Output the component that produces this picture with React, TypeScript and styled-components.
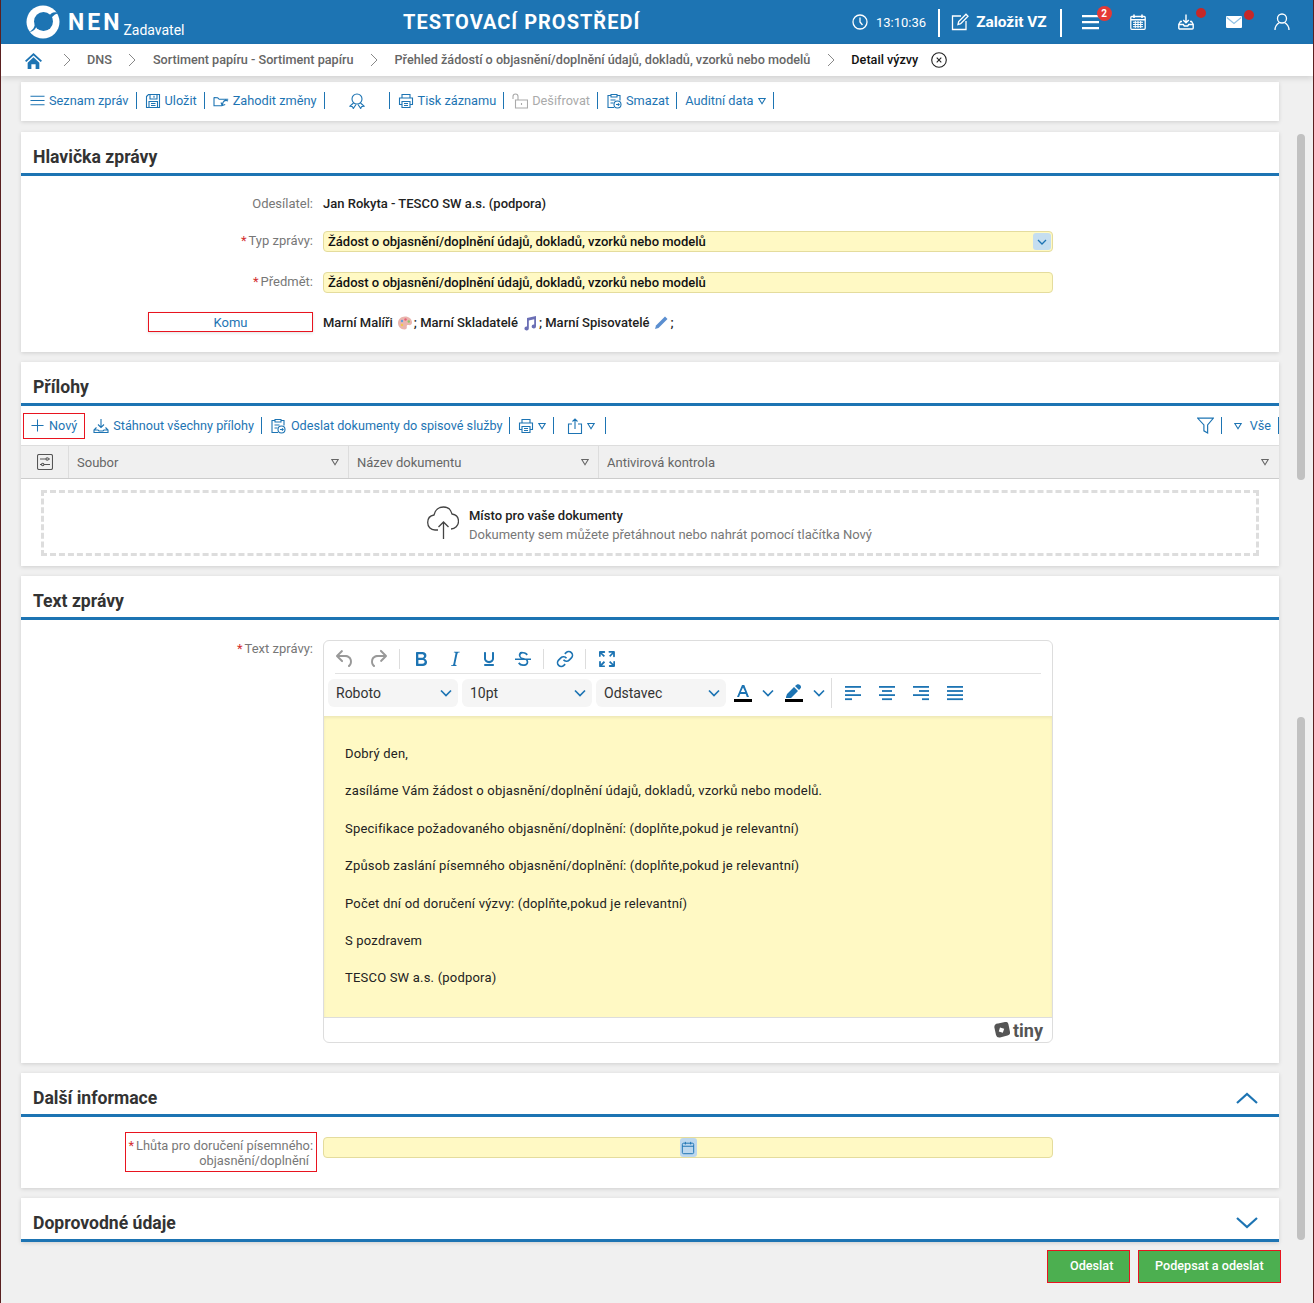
import React from "react";
import styled, { createGlobalStyle } from "styled-components";

const BLUE = "#1d74b3";
const YELLOW = "#fff9c4";

const Global = createGlobalStyle`
  html, body { margin: 0; padding: 0; background: #f0f0f0; }
  body { font-family: Roboto, "Liberation Sans", sans-serif; font-size: 13px; color: #222; }
`;

const Page = styled.div`
  position: relative;
  width: 1314px;
  height: 1303px;
  box-sizing: border-box;
  overflow: hidden;
  background: #f0f0f0;
  border-left: 1px solid #5a2020;
  border-right: 1px solid #5a2020;
`;

/* top bar */
const TopBar = styled.header`
  display: flex;
  align-items: center;
  height: 44px;
  background: ${BLUE};
  color: #fff;
`;
const Brand = styled.div`
  display: flex;
  align-items: center;
  width: 402px;
  box-sizing: border-box;
  padding-left: 25px;
`;
const BrandName = styled.span`
  margin-left: 8px;
  font-size: 23px;
  font-weight: 700;
  letter-spacing: 3px;
`;
const BrandRole = styled.span`
  align-self: flex-end;
  margin-left: 1px;
  font-size: 14px;
  line-height: 16px;
  margin-bottom: 1px;
`;
const EnvTitle = styled.div`
  width: 449px;
  font-size: 20px;
  font-weight: 700;
  letter-spacing: 1px;
  white-space: nowrap;
`;
const TopRight = styled.div`
  display: flex;
  align-items: center;
  height: 100%;
`;
const Clock = styled.div`
  display: flex;
  align-items: center;
  gap: 8px;
  font-size: 13px;
  padding-right: 12px;
`;
const TopDivider = styled.div`
  width: 2px;
  height: 28px;
  margin-top: 1px;
  background: #fff;
`;
const CreateLink = styled.div`
  display: flex;
  align-items: center;
  gap: 7px;
  padding: 0 13px 0 11px;
  font-size: 15.4px;
  font-weight: 700;
`;
const TopIcon = styled.div<{ $w: number; $first?: boolean }>`
  position: relative;
  display: flex;
  align-items: center;
  width: ${(p) => p.$w}px;
  margin-left: ${(p) => (p.$first ? 20 : 0)}px;
`;
const Badge = styled.span`
  position: absolute;
  top: -7px;
  left: 15px;
  width: 15px;
  height: 15px;
  border-radius: 50%;
  background: #e53935;
  color: #fff;
  font-size: 10px;
  font-weight: 700;
  line-height: 15px;
  text-align: center;
`;
const Dot = styled.span`
  position: absolute;
  top: -6px;
  left: 18px;
  width: 10px;
  height: 10px;
  border-radius: 50%;
  background: #c62828;
`;

/* breadcrumb */
const Crumbs = styled.nav`
  position: relative;
  display: flex;
  align-items: center;
  height: 32px;
  padding-left: 24px;
  background: #fff;
  box-shadow: 0 2px 6px rgba(0, 0, 0, 0.14);
`;
const HomeLink = styled.span`
  display: flex;
  color: ${BLUE};
  margin-right: 4px;
`;
const Crumb = styled.span<{ $current?: boolean }>`
  margin-top: -2px;
  font-weight: 500;
  font-size: 12.65px;
  color: ${(p) => (p.$current ? "#111" : "#666")};
  white-space: nowrap;
`;
const CrumbSep = styled.svg`
  width: 8px;
  height: 14px;
  margin: 0 16.5px;
  fill: none;
  stroke: #888;
  stroke-width: 1;
`;
const CrumbClose = styled.svg`
  width: 16px;
  height: 16px;
  margin-left: 13px;
  fill: none;
  stroke: #222;
  stroke-width: 1.1;
`;

/* content */
const Main = styled.main`
  display: flex;
  flex-direction: column;
  gap: 10px;
  width: 1258px;
  margin: 6px 0 0 20px;
`;
const ActionBar = styled.div`
  display: flex;
  align-items: center;
  height: 39px;
`;
const Tool = styled.div<{ $disabled?: boolean; $w?: number; $center?: boolean; $gap?: number }>`
  display: flex;
  align-items: center;
  justify-content: ${(p) => (p.$center ? "center" : "flex-start")};
  gap: ${(p) => p.$gap ?? 4}px;
  height: 17px;
  padding: 0 7px 0 8px;
  ${(p) => (p.$w ? `width: ${p.$w}px; box-sizing: border-box;` : "")}
  border-right: 1px solid ${BLUE};
  color: ${(p) => (p.$disabled ? "#aaa" : BLUE)};
  white-space: nowrap;
  font-size: 12.65px;
`;
const TopActions = styled(ActionBar)`
  box-sizing: border-box;
  margin-bottom: 1px;
  padding: 0 0 2px 1px;
  background: #fff;
  box-shadow: 0 1px 4px rgba(0, 0, 0, 0.14);
  ${Tool} {
    font-size: 12.75px;
  }
`;
const NewTool = styled(Tool)`
  height: 24px;
  margin-left: 2px;
  padding: 0 7px;
  gap: 5px;
  border: 1px solid #e8141f;
`;
const ShareTool = styled(Tool)`
  padding: 0 10px 0 13px;
`;
const AllTool = styled(Tool)`
  padding: 0 7px 0 12px;
  gap: 8px;
`;
const Spacer = styled.div`
  flex: 1;
`;
const Card = styled.section<{ $h: number }>`
  height: ${(p) => p.$h}px;
  background: #fff;
  box-shadow: 0 1px 4px rgba(0, 0, 0, 0.14);
`;
const CardHead = styled.div`
  display: flex;
  align-items: center;
  justify-content: space-between;
  height: 33px;
  padding: 8px 21px 0 12px;
  border-bottom: 3px solid ${BLUE};
  font-size: 17.6px;
  font-weight: 700;
  color: #333;
`;
const Row = styled.div<{ $top: number; $align?: string }>`
  display: grid;
  grid-template-columns: 292px 730px;
  column-gap: 10px;
  align-items: ${(p) => p.$align || "center"};
  min-height: 21px;
  margin-top: ${(p) => p.$top}px;
`;
const Label = styled.div`
  text-align: right;
  color: #777;
  font-size: 13px;
`;
const ReqLabel = styled(Label)`
  padding-bottom: 3px;
`;
const EditorLabel = styled(Label)`
  padding-top: 1px;
`;
const Req = styled.span`
  color: #d32f2f;
  margin-right: 2px;
`;
const Value = styled.div`
  font-weight: 500;
  color: #222;
  font-size: 13px;
  display: flex;
  align-items: center;
`;
const Field = styled.div`
  position: relative;
  display: flex;
  align-items: center;
  height: 21px;
  box-sizing: border-box;
  padding-left: 4px;
  background: ${YELLOW};
  border: 1px solid #e4dc9d;
  border-radius: 4px;
  font-weight: 500;
  color: #111;
`;
const DropButton = styled.span`
  position: absolute;
  right: 1px;
  top: 1px;
  width: 18px;
  height: 17px;
  border-radius: 3px;
  background: #c5def0;
  display: flex;
  align-items: center;
  justify-content: center;
`;
const KomuBox = styled.div`
  justify-self: end;
  align-self: start;
  width: 165px;
  height: 20px;
  box-sizing: border-box;
  border: 1px solid #e8141f;
  color: ${BLUE};
  text-align: center;
  line-height: 19px;
  box-shadow: 0 1px 3px rgba(0, 0, 0, 0.12);
`;
const Emoji = styled.svg`
  width: 16px;
  height: 16px;
  margin: 0 1px 0 4px;
`;
const Table = styled.div`
  display: grid;
  grid-template-columns: 48px 280px 250px 1fr;
  height: 32px;
  background: #f0f0f0;
  border-top: 1px solid #ddd;
  border-bottom: 1px solid #ccc;
`;
const Col = styled.div`
  display: flex;
  align-items: center;
  justify-content: space-between;
  padding: 0 9px 0 8px;
  border-right: 1px solid #ddd;
  color: #666;
  &:last-child {
    border-right: none;
    padding-right: 10px;
  }
`;
const ColIcon = styled(Col)`
  justify-content: center;
  padding: 0;
  color: #555;
`;
const GreyTri = styled.span`
  color: #666;
  display: flex;
`;
const DropZone = styled.div`
  display: flex;
  align-items: center;
  justify-content: center;
  gap: 10px;
  height: 66px;
  box-sizing: border-box;
  margin: 11px 20px 10px;
  border: 3px dashed #ddd;
  padding: 0 1px 0 0;
`;
const CloudIcon = styled.span`
  display: flex;
  color: #444;
`;
const DropCopy = styled.div`
  margin-top: 4px;
`;
const DropTitle = styled.div`
  font-weight: 500;
  color: #222;
  line-height: 19px;
`;
const DropText = styled.div`
  color: #777;
  line-height: 19px;
`;

/* editor */
const Editor = styled.div`
  display: flex;
  flex-direction: column;
  height: 403px;
  box-sizing: border-box;
  border: 1px solid #ddd;
  border-radius: 6px;
  overflow: hidden;
`;
const EdRow1 = styled.div`
  display: flex;
  align-items: center;
  height: 33px;
  margin: 0 11px;
  padding-top: 3px;
  border-bottom: 1px solid #e2e2e2;
  box-sizing: border-box;
`;
const EdRow2 = styled.div`
  display: flex;
  align-items: center;
  height: 42px;
  padding: 0 0 5px 4px;
  box-sizing: border-box;
  gap: 4px;
`;
const EdBtn = styled.div<{ $w: number; $muted?: boolean; $ml?: number }>`
  display: flex;
  align-items: center;
  justify-content: center;
  width: ${(p) => p.$w}px;
  margin-left: ${(p) => p.$ml || 0}px;
  color: ${(p) => (p.$muted ? "#999" : BLUE)};
`;
const EdSep = styled.div<{ $h?: number; $l?: number; $r?: number }>`
  width: 1px;
  height: ${(p) => p.$h || 20}px;
  background: #ddd;
  margin: 0 ${(p) => p.$r ?? 5}px 0 ${(p) => p.$l ?? 5}px;
`;
const Select = styled.div`
  display: flex;
  align-items: center;
  justify-content: space-between;
  width: 130px;
  height: 28px;
  box-sizing: border-box;
  padding: 0 6px 0 8px;
  border-radius: 6px;
  background: #f5f5f5;
  font-size: 14px;
  color: #333;
`;
const EdBody = styled.div`
  flex: 1;
  padding: 29px 21px 0;
  background: ${YELLOW};
  box-shadow: inset 0 2px 3px rgba(0, 0, 0, 0.07);
  font-size: 13px;
  color: #222;
`;
const Para = styled.p`
  margin: 0 0 19.4px;
  line-height: 18px;
  letter-spacing: 0.2px;
`;
const EdFoot = styled.div`
  display: flex;
  align-items: center;
  justify-content: flex-end;
  gap: 3px;
  height: 25px;
  box-sizing: border-box;
  padding-right: 9px;
  border-top: 1px solid #ddd;
  font-size: 18px;
  font-weight: 700;
  color: #555;
`;
const DeadlineLabel = styled.div`
  justify-self: end;
  width: 192px;
  height: 40px;
  box-sizing: border-box;
  margin-right: -4px;
  padding: 5px 3px 0 0;
  border: 1px solid #e8141f;
  color: #777;
  font-size: 12.85px;
  text-align: right;
  line-height: 15px;
  white-space: nowrap;
`;
const DeadlineSecond = styled.span`
  display: block;
  padding-right: 4px;
`;
const DeadlineField = styled(Field)`
  justify-content: center;
  margin-top: 5px;
  padding: 0;
`;
const CalendarButton = styled.span`
  display: flex;
  align-items: center;
  justify-content: center;
  width: 17px;
  height: 19px;
  border-radius: 3px;
  background: #bcd7ee;
  color: ${BLUE};
`;
const Actions = styled.div`
  display: flex;
  justify-content: flex-end;
  gap: 8px;
  width: 1280px;
  margin-top: 8px;
`;
const Submit = styled.button<{ $w: number; $pl: number }>`
  width: ${(p) => p.$w}px;
  height: 33px;
  padding: 0 0 2px ${(p) => p.$pl}px;
  text-align: left;
  background: #4caf50;
  border: 1px solid #e8141f;
  color: #fff;
  font-family: inherit;
  font-size: 12.65px;
  font-weight: 500;
`;
const Thumb = styled.div<{ $top: number; $h: number }>`
  position: absolute;
  left: 1296px;
  top: ${(p) => p.$top}px;
  width: 8px;
  height: ${(p) => p.$h}px;
  border-radius: 4px;
  background: #c1c1c1;
`;

/* icons */
const Ico = styled.svg<{ $s?: number; $w?: number; $sw?: number }>`
  width: ${(p) => p.$w || p.$s || 16}px;
  height: ${(p) => p.$s || 16}px;
  flex: none;
  fill: none;
  stroke: currentColor;
  stroke-width: ${(p) => p.$sw || 1.1};
`;
const Solid = styled.svg<{ $s?: number }>`
  width: ${(p) => p.$s || 24}px;
  height: ${(p) => p.$s || 24}px;
  fill: currentColor;
  flex: none;
`;
const Tri = () => (
  <Ico viewBox="0 0 8 8" $s={8}>
    <path d="M.8 1.5h6.4L4 6.8z" />
  </Ico>
);
const Chev = () => (
  <svg width="12" height="8" viewBox="0 0 12 8" fill="none" stroke={BLUE} strokeWidth="1.7">
    <path d="M1 1.5l5 5 5-5" />
  </svg>
);
const PrintIcon = () => (
  <Ico viewBox="0 0 16 16" $s={16}>
    <path d="M4 5V1.5h8V5M4 11.5H1.5V5h13v6.5H12" />
    <path d="M4 8.5h8v6H4zM6 10.5h4M6 12.5h4" />
  </Ico>
);
const ClipIcon = () => (
  <Ico viewBox="0 0 16 16" $s={16}>
    <path d="M5 2.5H2v12h6M11 2.5h3v5" />
    <path d="M5 1.5h6V4H5zM4.5 7h5M4.5 10h3" />
    <circle cx="11.5" cy="11.5" r="3.5" />
    <path d="M10 11.5h3M12 10.3l1.2 1.2-1.2 1.2" />
  </Ico>
);
const DownloadIcon = () => (
  <Ico viewBox="0 0 16 16" $s={16}>
    <path d="M8 1v8.500M5 6.500l3 3 3-3M3.500 9.500L1 12v2.500h14V12l-2.500-2.500M1 12h4l1 1h4l1-1h4" />
  </Ico>
);
const CrumbArrow = () => (
  <CrumbSep viewBox="0 0 8 14">
    <path d="M1 1l6 6-6 6" />
  </CrumbSep>
);

const paragraphs = [
  "Dobrý den,",
  "zasíláme Vám žádost o objasnění/doplnění údajů, dokladů, vzorků nebo modelů.",
  "Specifikace požadovaného objasnění/doplnění: (doplňte,pokud je relevantní)",
  "Způsob zaslání písemného objasnění/doplnění: (doplňte,pokud je relevantní)",
  "Počet dní od doručení výzvy: (doplňte,pokud je relevantní)",
  "S pozdravem",
  "TESCO SW a.s. (podpora)",
];

const crumbs = [
  "DNS",
  "Sortiment papíru - Sortiment papíru",
  "Přehled žádostí o objasnění/doplnění údajů, dokladů, vzorků nebo modelů",
];

const alignRows = [
  [16, 10, 16, 7],
  [16, 10, 16, 10],
  [16, 10, 16, 7],
  [16, 16, 16, 16],
];

export default function App() {
  return (
    <Page>
      <Global />
      <TopBar>
        <Brand>
          <svg width="34" height="34" viewBox="0 0 34 34">
            <circle cx="17" cy="17" r="16.5" fill="#fff" />
            <circle cx="17.5" cy="16.5" r="9.5" fill={BLUE} />
            <path d="M3 27C7 25 9 22 9 17l2 3c-1 4-4 7-8 7z" fill={BLUE} />
            <path d="M33 8c-4 1-7 3-8 7l-2-3c1-4 5-6 10-4z" fill={BLUE} />
          </svg>
          <BrandName>NEN</BrandName>
          <BrandRole>Zadavatel</BrandRole>
        </Brand>
        <EnvTitle>TESTOVACÍ PROSTŘEDÍ</EnvTitle>
        <TopRight>
          <Clock>
            <Ico viewBox="0 0 16 16" $s={16} $sw={1.3}>
              <circle cx="8" cy="8" r="7" />
              <path d="M8 3.5V8l2.5 3" />
            </Ico>
            13:10:36
          </Clock>
          <TopDivider />
          <CreateLink>
            <Ico viewBox="0 0 18 18" $s={18} $sw={1.3}>
              <path d="M10 3H1.500v13.500H15V8" />
              <path d="M7 11.500l.7-3L15 1.200l2 2-7.300 7.400z" />
            </Ico>
            Založit VZ
          </CreateLink>
          <TopDivider />
          <TopIcon $w={48} $first>
            <Solid viewBox="0 0 18 14" $s={18}>
              <path d="M0 0h17v2.200H0zM0 6h17v2.200H0zM0 12h17v2.200H0z" />
            </Solid>
            <Badge>2</Badge>
          </TopIcon>
          <TopIcon $w={48}>
            <Ico viewBox="0 0 16 16" $s={16} $sw={1.3}>
              <rect x=".8" y="2.5" width="14.4" height="12.8" rx="1" />
              <path d="M4 .5V4M12 .5V4M.8 5.800h14.400" strokeWidth="1.6" />
              <path d="M3 8.300h10M3 10.500h10M3 12.700h10M5.300 7v7M8 7v7M10.700 7v7" strokeWidth="1" />
            </Ico>
          </TopIcon>
          <TopIcon $w={48}>
            <Ico viewBox="0 0 16 16" $s={16} $sw={1.4}>
              <path d="M8 .5v8M5.200 6L8 8.800 10.800 6" />
              <path d="M4 7.500H2.500L.8 10.500V14a1 1 0 001 1h12.400a1 1 0 001-1v-3.500L13.500 7.500H12" />
              <path d="M.8 10.500h4.500l1 1.500h3.400l1-1.500h4.500" />
            </Ico>
            <Dot />
          </TopIcon>
          <TopIcon $w={48}>
            <svg width="16" height="12" viewBox="0 0 16 12">
              <rect width="16" height="12" rx="1" fill="#fff" />
              <path d="M.8 1.500L8 7.500l7.200-6" fill="none" stroke="#8fc0e4" strokeWidth="1.2" />
            </svg>
            <Dot />
          </TopIcon>
          <TopIcon $w={16}>
            <Ico viewBox="0 0 16 18" $s={18} $w={16} $sw={1.3}>
              <circle cx="8" cy="5.5" r="4.5" />
              <path d="M1 17c0-4 2-6 4.500-7.500M15 17c0-4-2-6-4.500-7.500" />
            </Ico>
          </TopIcon>
        </TopRight>
      </TopBar>

      <Crumbs>
        <HomeLink>
          <Solid viewBox="0 0 16 16" $s={17}>
            <path d="M8 1L0 8.200l1.200 1.200L8 3.400l6.800 6L16 8.200zM2.500 10L8 5l5.500 5v6H10v-4.500H6V16H2.500z" />
          </Solid>
        </HomeLink>
        {crumbs.map((c) => (
          <React.Fragment key={c}>
            <CrumbArrow />
            <Crumb>{c}</Crumb>
          </React.Fragment>
        ))}
        <CrumbArrow />
        <Crumb $current>Detail výzvy</Crumb>
        <CrumbClose viewBox="0 0 16 16">
          <circle cx="8" cy="8" r="7.3" />
          <path d="M5.700 5.700l4.600 4.600M10.300 5.700l-4.600 4.600" />
        </CrumbClose>
      </Crumbs>

      <Main>
        <TopActions>
          <Tool>
            <Ico viewBox="0 0 16 16" $s={15}>
              <path d="M.5 3.500h15M.5 8h15M.5 12.500h15" />
            </Ico>
            Seznam zpráv
          </Tool>
          <Tool>
            <Ico viewBox="0 0 16 16" $s={16}>
              <path d="M1.500 3.500l2-2h11v13h-13zM5 1.500V6h7V1.500M9 2.800v2M4 8.500h8.500v6H4zM6 10.500h4.500M6 12.500h4.500" />
            </Ico>
            Uložit
          </Tool>
          <Tool>
            <Ico viewBox="0 0 16 16" $s={16}>
              <path d="M.7 4.500l4 .3 1.500 1.500h9M1 4.700v8h8M15 8c-2-1-4-.5-5 1.500l-.8 3M8 9.500l1.200 3 3-1" />
            </Ico>
            Zahodit změny
          </Tool>
          <Tool $w={65} $center>
            <Ico viewBox="0 0 16 16" $s={16}>
              <circle cx="8" cy="6" r="5" />
              <path d="M4.500 10L1 13.200l2.500.6.8 1.700L7 11.500M11.500 10l3.500 3.200-2.500.6-.8 1.700L9 11.500" />
            </Ico>
          </Tool>
          <Tool>
            <PrintIcon />
            Tisk záznamu
          </Tool>
          <Tool $disabled>
            <Ico viewBox="0 0 16 16" $s={16}>
              <path d="M1 6V3.500a2.500 2.500 0 015 0V7M3.500 7h12v8h-12zM9.500 10v2" />
            </Ico>
            Dešifrovat
          </Tool>
          <Tool>
            <ClipIcon />
            Smazat
          </Tool>
          <Tool>
            Auditní data
            <Tri />
          </Tool>
        </TopActions>

        <Card $h={220}>
          <CardHead>Hlavička zprávy</CardHead>
          <Row $top={17}>
            <Label>Odesílatel:</Label>
            <Value>Jan Rokyta - TESCO SW a.s. (podpora)</Value>
          </Row>
          <Row $top={17}>
            <ReqLabel>
              <Req>*</Req>Typ zprávy:
            </ReqLabel>
            <Field>
              Žádost o objasnění/doplnění údajů, dokladů, vzorků nebo modelů
              <DropButton>
                <svg width="10" height="6" viewBox="0 0 10 6" fill="none" stroke={BLUE} strokeWidth="1.3">
                  <path d="M1 1l4 4 4-4" />
                </svg>
              </DropButton>
            </Field>
          </Row>
          <Row $top={20}>
            <ReqLabel>
              <Req>*</Req>Předmět:
            </ReqLabel>
            <Field>Žádost o objasnění/doplnění údajů, dokladů, vzorků nebo modelů</Field>
          </Row>
          <Row $top={19}>
            <KomuBox>Komu</KomuBox>
            <Value>
              Marní Malíři
              <Emoji viewBox="0 0 16 16">
                <path d="M8 1.500c4 0 7 2.600 7 6 0 2.500-2 3-3.500 2.600-1.300-.3-2 .4-1.700 1.700.3 1.500-.6 2.700-2.300 2.700C3.500 14.500 1 11.500 1 8c0-3.600 3-6.500 7-6.500z" fill="#eab5ad" />
                <circle cx="5" cy="6" r="1.2" fill="#5f9ed8" />
                <circle cx="8.5" cy="4.5" r="1.2" fill="#e85f7a" />
                <circle cx="11.800" cy="6.5" r="1.2" fill="#8fc46a" />
                <circle cx="5" cy="10" r="1.2" fill="#f2c84b" />
              </Emoji>
              ; Marní Skladatelé
              <Emoji viewBox="0 0 16 16">
                <path d="M5 3l9-2v10.500a2.200 2 0 11-1.800-2V4.200L6.800 5.400v8.100a2.200 2 0 11-1.800-2z" fill="#6b6fb5" />
              </Emoji>
              ; Marní Spisovatelé
              <Emoji viewBox="0 0 16 16">
                <path d="M12 1.500l2.500 2.500-9 9-3.500 1 1-3.500z" fill="#5b8fd0" />
              </Emoji>
              ;
            </Value>
          </Row>
        </Card>

        <Card $h={204}>
          <CardHead>Přílohy</CardHead>
          <ActionBar>
            <NewTool>
              <Ico viewBox="0 0 14 14" $s={13}>
                <path d="M7 .5v13M.5 7h13" />
              </Ico>
              Nový
            </NewTool>
            <Tool>
              <DownloadIcon />
              Stáhnout všechny přílohy
            </Tool>
            <Tool $gap={5}>
              <ClipIcon />
              Odeslat dokumenty do spisové služby
            </Tool>
            <Tool>
              <PrintIcon />
              <Tri />
            </Tool>
            <ShareTool>
              <Ico viewBox="0 0 16 16" $s={16}>
                <path d="M5 6H1.500v9.500h13V6H11M8 11V1M5.500 3.500L8 1l2.500 2.500" />
              </Ico>
              <Tri />
            </ShareTool>
            <Spacer />
            <Tool>
              <Ico viewBox="0 0 16 16" $s={17}>
                <path d="M.5 1h15L10 7.500V15l-3.500-2V7.500z" />
              </Ico>
            </Tool>
            <AllTool>
              <Tri />
              Vše
            </AllTool>
          </ActionBar>
          <Table>
            <ColIcon>
              <Ico viewBox="0 0 16 16" $s={16}>
                <rect x=".5" y=".5" width="15" height="15" rx="1.5" />
                <path d="M3 5h6M11.500 5H13M3 10.500h1.500M7 10.500h6" />
                <circle cx="10.2" cy="5" r="1.2" />
                <circle cx="5.7" cy="10.5" r="1.2" />
              </Ico>
            </ColIcon>
            <Col>
              Soubor
              <GreyTri>
                <Tri />
              </GreyTri>
            </Col>
            <Col>
              Název dokumentu
              <GreyTri>
                <Tri />
              </GreyTri>
            </Col>
            <Col>
              Antivirová kontrola
              <GreyTri>
                <Tri />
              </GreyTri>
            </Col>
          </Table>
          <DropZone>
            <CloudIcon>
              <Ico viewBox="0 0 32 34" $s={34} $w={32} $sw={1.3}>
                <path d="M11 24H8C3.500 24 .7 20.500.7 16.500.7 12 3.700 9.500 7 9 8 4 12 1 16.500 1 21 1 24 4 25 8c4 .5 6.500 3.500 6.500 7.500S28 23 24 23" />
                <path d="M16.500 33V16M11.500 21l5-5 5 5" />
              </Ico>
            </CloudIcon>
            <DropCopy>
              <DropTitle>Místo pro vaše dokumenty</DropTitle>
              <DropText>Dokumenty sem můžete přetáhnout nebo nahrát pomocí tlačítka Nový</DropText>
            </DropCopy>
          </DropZone>
        </Card>

        <Card $h={487}>
          <CardHead>Text zprávy</CardHead>
          <Row $top={20} $align="start">
            <EditorLabel>
              <Req>*</Req>Text zprávy:
            </EditorLabel>
            <Editor>
              <EdRow1>
                <EdBtn $w={20} $muted>
                  <Solid viewBox="0 0 24 24">
                    <path d="M6.400 8H12c3.700 0 6.200 2 6.800 5.100.6 2.700-.4 5.600-2.300 6.800a1 1 0 01-1-1.800c1.100-.7 1.800-2.700 1.400-4.600-.5-2.100-2.100-3.500-4.900-3.500H6.400l3.300 3.300a1 1 0 11-1.400 1.400l-5-5a1 1 0 010-1.400l5-5a1 1 0 011.400 1.400L6.400 8z" />
                  </Solid>
                </EdBtn>
                <EdBtn $w={33} $muted $ml={6}>
                  <Solid viewBox="0 0 24 24">
                    <path d="M17.600 10H12c-2.800 0-4.400 1.400-4.900 3.500-.4 2 .3 3.900 1.400 4.600a1 1 0 11-1 1.800c-1.900-1.200-2.900-4.100-2.300-6.800C5.800 10 8.300 8 12 8h5.600l-3.300-3.300a1 1 0 111.400-1.400l5 5a1 1 0 010 1.400l-5 5a1 1 0 01-1.400-1.400l3.300-3.300z" />
                  </Solid>
                </EdBtn>
                <EdSep $r={4} />
                <EdBtn $w={34}>
                  <Solid viewBox="0 0 24 24">
                    <path fillRule="evenodd" d="M7.800 19c-.3 0-.5 0-.6-.2l-.2-.5V5.700c0-.2 0-.4.2-.5l.6-.2h5c1.500 0 2.700.3 3.500 1 .7.6 1.100 1.400 1.100 2.500a3 3 0 01-.6 1.900c-.4.6-1 1-1.600 1.200.4.1.9.3 1.300.6s.8.7 1 1.200c.4.4.5 1 .5 1.600 0 1.300-.4 2.300-1.300 3-.8.7-2.100 1-3.800 1H7.800zm5-8.300c.6 0 1.200-.1 1.600-.5.4-.3.6-.7.6-1.300 0-1.100-.8-1.700-2.300-1.700H9.300v3.500h3.400zm.5 6c.7 0 1.300-.1 1.700-.4.4-.4.6-.9.6-1.500s-.2-1-.7-1.400c-.4-.3-1-.4-2-.4H9.400v3.800h4z" />
                  </Solid>
                </EdBtn>
                <EdBtn $w={34}>
                  <Solid viewBox="0 0 24 24">
                    <path d="M16.700 4.700l-.1.9h-.3c-.6 0-1 0-1.400.3-.3.3-.4.6-.5 1.100l-2.100 9.800v.6c0 .5.4.8 1.200.8h.2l-.2.8H8l.2-.8h.2c1.100 0 1.800-.5 2-1.500l2-9.800.1-.5c0-.6-.4-.8-1.400-.8h-.3l.2-.9h5.800z" />
                  </Solid>
                </EdBtn>
                <EdBtn $w={34}>
                  <Solid viewBox="0 0 24 24">
                    <path d="M16 5c.6 0 1 .4 1 1v5.500a4 4 0 01-.4 1.800l-1 1.400a5.300 5.300 0 01-5.500 1 5 5 0 01-1.600-1c-.5-.4-.8-.9-1.100-1.400a4 4 0 01-.4-1.800V6c0-.6.4-1 1-1s1 .4 1 1v5.500c0 .3 0 .6.2 1l.6.7a3.300 3.300 0 002.200.8 3.400 3.400 0 002.200-.8c.3-.2.4-.5.6-.8l.2-.9V6c0-.6.4-1 1-1zM8 17h8c.6 0 1 .4 1 1s-.4 1-1 1H8a1 1 0 010-2z" />
                  </Solid>
                </EdBtn>
                <EdBtn $w={34}>
                  <Solid viewBox="0 0 24 24">
                    <path d="M15.600 8.500c-.5-.7-1-1.100-1.300-1.300-.6-.4-1.300-.6-2-.6-2.700 0-2.800 1.700-2.800 2.100 0 1.600 1.800 2 3.200 2.300 4.400.9 4.600 2.800 4.600 3.900 0 1.400-.7 4.100-5 4.100A6.200 6.200 0 017 16.400l1.500-1.100c.4.6 1.600 2 3.700 2 1.600 0 2.500-.4 3-1 .3-.4.4-.9.4-1.400 0-.7-.2-1.200-.6-1.600-.5-.5-1.300-.9-2.400-1.100-.5-.1-1.400-.3-2.200-.6-.4-.2-.9-.4-1.200-.7-.9-.7-1.400-1.600-1.400-2.800 0-1.200.5-2.300 1.400-3.100A5.400 5.400 0 0112.300 5c2.300 0 3.700 1 4.600 2.300l-1.300 1.200zM4 11.500h16V13H4z" />
                  </Solid>
                </EdBtn>
                <EdSep $l={3} />
                <EdBtn $w={31}>
                  <Ico viewBox="0 0 24 24" $s={18} $sw={2.2}>
                    <path d="M10 13a5 5 0 0 0 7.540.54l3-3a5 5 0 0 0-7.070-7.070l-1.720 1.710" />
                    <path d="M14 11a5 5 0 0 0-7.540-.54l-3 3a5 5 0 0 0 7.070 7.070l1.710-1.710" />
                  </Ico>
                </EdBtn>
                <EdSep />
                <EdBtn $w={32}>
                  <Solid viewBox="0 0 24 24">
                    <path d="M15.300 10l-1.200-1.300 2.900-3h-2.300a.9.9 0 110-1.700H19c.5 0 .9.4.9.9v4.400a.9.9 0 11-1.800 0V7l-2.900 3zm0 4l3 2.900v-2.300a.9.9 0 011.700 0V19c0 .5-.4.9-.9.9h-4.400a.9.9 0 110-1.800H17l-3-2.900 1.300-1.200zM10 15.400l-2.900 3h2.300a.9.9 0 010 1.700H5a.9.9 0 01-.9-.9v-4.400a.9.9 0 111.800 0V17l2.900-3 1.200 1.300zM8.700 10L5.700 7v2.300a.9.9 0 01-1.700 0V5c0-.5.4-.9.9-.9h4.400a.9.9 0 010 1.800H7l3 2.900-1.300 1.200z" />
                  </Solid>
                </EdBtn>
              </EdRow1>
              <EdRow2>
                <Select>
                  Roboto <Chev />
                </Select>
                <Select>
                  10pt <Chev />
                </Select>
                <Select>
                  Odstavec <Chev />
                </Select>
                <EdBtn $w={18} $ml={4}>
                  <Solid viewBox="0 0 18 18" $s={18}>
                    <path d="M8 1h2.300l4.700 12h-2.200l-1.100-3H6.200l-1.100 3H3zm-1.100 7h4.300L9 3.500z" />
                    <path d="M0 15h18v3H0z" fill="#000" />
                  </Solid>
                </EdBtn>
                <EdBtn $w={20} $ml={2}>
                  <Chev />
                </EdBtn>
                <EdBtn $w={18} $ml={3}>
                  <Solid viewBox="0 0 18 18" $s={18}>
                    <path d="M1 13l1-3 7-7 4 4-7 7H1zM10 2l2-1.500c1-.5 2-.3 3 .5s1.300 2 .8 3L14 6z" />
                    <path d="M0 15h18v3H0z" fill="#000" />
                  </Solid>
                </EdBtn>
                <EdBtn $w={20} $ml={2}>
                  <Chev />
                </EdBtn>
                <EdSep $h={30} $l={-2} $r={2} />
                {alignRows.map((w, i) => (
                  <EdBtn $w={30} key={i}>
                    <Solid viewBox="0 0 16 14" $s={16}>
                      {w.map((len, r) => {
                        const x = i === 1 ? (16 - len) / 2 : i === 2 ? 16 - len : 0;
                        return <rect key={r} x={x} y={r * 4.1} width={len} height="1.8" />;
                      })}
                    </Solid>
                  </EdBtn>
                ))}
              </EdRow2>
              <EdBody>
                {paragraphs.map((p) => (
                  <Para key={p}>{p}</Para>
                ))}
              </EdBody>
              <EdFoot>
                <svg width="16" height="16" viewBox="0 0 16 16">
                  <path fillRule="evenodd" d="M4 1.500L11 0a3 3 0 013.500 2.500L16 10a3 3 0 01-2.500 3.500L6 15.500A3.500 3.500 0 012 13L.5 6A3.500 3.500 0 014 1.500zM6 5.500L4.800 9.500l4 1.200 1.400-4z" fill="#555" />
                </svg>
                tiny
              </EdFoot>
            </Editor>
          </Row>
        </Card>

        <Card $h={115}>
          <CardHead>
            Další informace
            <svg width="22" height="12" viewBox="0 0 22 12" fill="none" stroke={BLUE} strokeWidth="2.2">
              <path d="M1 11l10-9 10 9" />
            </svg>
          </CardHead>
          <Row $top={15} $align="start">
            <DeadlineLabel>
              <Req>*</Req>Lhůta pro doručení písemného:
              <DeadlineSecond>objasnění/doplnění</DeadlineSecond>
            </DeadlineLabel>
            <DeadlineField>
              <CalendarButton>
                <Ico viewBox="0 0 16 16" $s={14}>
                  <rect x="1.5" y="2.5" width="13" height="12" rx="1.5" />
                  <path d="M1.500 6h13M5 1v3M11 1v3" />
                </Ico>
              </CalendarButton>
            </DeadlineField>
          </Row>
        </Card>

        <Card $h={44}>
          <CardHead>
            Doprovodné údaje
            <svg width="22" height="12" viewBox="0 0 22 12" fill="none" stroke={BLUE} strokeWidth="2.2">
              <path d="M1 1l10 9 10-9" />
            </svg>
          </CardHead>
        </Card>
      </Main>

      <Actions>
        <Submit $w={83} $pl={22}>
          Odeslat
        </Submit>
        <Submit $w={143} $pl={16}>
          Podepsat a odeslat
        </Submit>
      </Actions>

      <Thumb $top={134} $h={346} />
      <Thumb $top={717} $h={523} />
    </Page>
  );
}
